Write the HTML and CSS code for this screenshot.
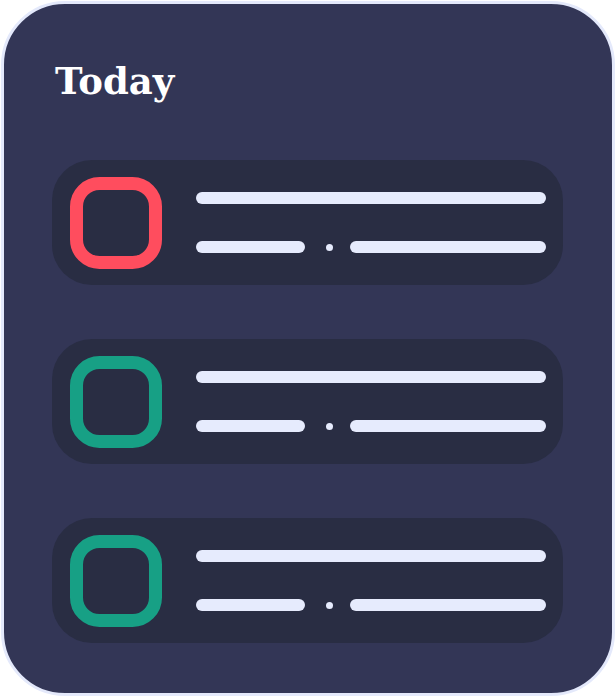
FILE: index.html
```html
<!DOCTYPE html>
<html>
<head>
<meta charset="utf-8">
<link rel="stylesheet" href="styles.css">
</head>
<body>
<div class="card">
  <h1 class="title">Today</h1>
  <div class="list">
    <div class="row">
      <svg class="check" width="92" height="92" viewBox="0 0 92 92"><rect x="6.5" y="6.5" width="79" height="79" rx="23" fill="none" stroke="#ff4d5e" stroke-width="13"/></svg>
      <div class="lines">
        <div class="line long"></div>
        <div class="sub"><div class="line short"></div><div class="dot"></div><div class="line mid"></div></div>
      </div>
    </div>
    <div class="row">
      <svg class="check" width="92" height="92" viewBox="0 0 92 92"><rect x="6.5" y="6.5" width="79" height="79" rx="23" fill="none" stroke="#17a085" stroke-width="13"/></svg>
      <div class="lines">
        <div class="line long"></div>
        <div class="sub"><div class="line short"></div><div class="dot"></div><div class="line mid"></div></div>
      </div>
    </div>
    <div class="row">
      <svg class="check" width="92" height="92" viewBox="0 0 92 92"><rect x="6.5" y="6.5" width="79" height="79" rx="23" fill="none" stroke="#17a085" stroke-width="13"/></svg>
      <div class="lines">
        <div class="line long"></div>
        <div class="sub"><div class="line short"></div><div class="dot"></div><div class="line mid"></div></div>
      </div>
    </div>
  </div>
</div>
</body>
</html>
```
FILE: styles.css
```css
html, body { margin: 0; padding: 0; background: #ffffff; }
.card {
  box-sizing: border-box;
  margin: 1px;
  width: 614px;
  height: 695px;
  background: #333656;
  border: 3px solid #e4e9fb;
  border-radius: 64px;
  padding: 55px 48px 0 48px;
}
.title {
  margin: 0 0 0 3px;
  font-family: "DejaVu Serif", serif;
  font-weight: bold;
  font-size: 37px;
  line-height: 44px;
  color: #ffffff;
  height: 44px;
}
.list {
  margin-top: 57px;
  display: flex;
  flex-direction: column;
  gap: 54px;
}
.row {
  box-sizing: border-box;
  width: 511px;
  height: 125px;
  background: #292d43;
  border-radius: 40px;
  display: flex;
  align-items: center;
  padding-left: 18px;
  gap: 34px;
}
.check { display: block; flex: none; }
.lines {
  display: flex;
  flex-direction: column;
  gap: 37px;
  width: 350px;
}
.line {
  height: 12px;
  border-radius: 6px;
  background: #e6ebfd;
}
.long { width: 350px; }
.sub { display: flex; align-items: center; }
.short { width: 109px; }
.dot { width: 7px; height: 7px; border-radius: 50%; background: #e6ebfd; margin: 0 17px 0 21px; }
.mid { width: 196px; }
```
